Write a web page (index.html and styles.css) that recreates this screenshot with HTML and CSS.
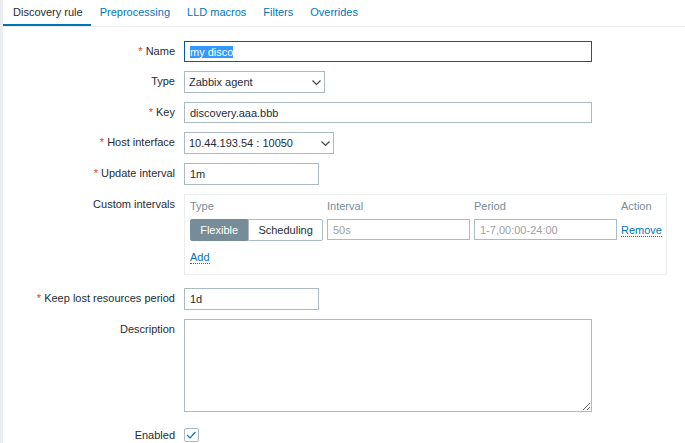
FILE: index.html
```html
<!DOCTYPE html>
<html lang="en">
<head>
  <meta charset="UTF-8">
  <title>Discovery rule</title>
  <link rel="stylesheet" href="styles.css">
</head>
<body>
  <nav class="tabs">
    <a class="tab active" href="#rule">Discovery rule</a>
    <a class="tab" href="#preprocessing">Preprocessing</a>
    <a class="tab" href="#macros">LLD macros</a>
    <a class="tab" href="#filters">Filters</a>
    <a class="tab" href="#overrides">Overrides</a>
  </nav>

  <form class="form">
    <label class="required" for="name">Name</label>
    <input class="text wide" type="text" id="name" value="my disco">

    <label for="type">Type</label>
    <div class="select type-select">
      <select id="type"><option>Zabbix agent</option></select>
      <svg viewBox="0 0 9 6"><path d="M0.5 0.5L4.5 4.5L8.5 0.5"/></svg>
    </div>

    <label class="required" for="key">Key</label>
    <input class="text wide" type="text" id="key" value="discovery.aaa.bbb">

    <label class="required" for="interface">Host interface</label>
    <div class="select interface-select">
      <select id="interface"><option>10.44.193.54 : 10050</option></select>
      <svg viewBox="0 0 9 6"><path d="M0.5 0.5L4.5 4.5L8.5 0.5"/></svg>
    </div>

    <label class="required" for="delay">Update interval</label>
    <input class="text short" type="text" id="delay" value="1m">

    <span class="label" id="intervalsLabel">Custom intervals</span>
    <div class="intervals">
      <table aria-labelledby="intervalsLabel">
        <thead>
          <tr><th>Type</th><th>Interval</th><th>Period</th><th>Action</th></tr>
        </thead>
        <tbody>
          <tr>
            <td>
              <div class="segmented">
                <input type="radio" name="intervalType" id="flexible" checked>
                <label for="flexible">Flexible</label>
                <input type="radio" name="intervalType" id="scheduling">
                <label for="scheduling">Scheduling</label>
              </div>
            </td>
            <td><input class="text" type="text" placeholder="50s" aria-label="Interval"></td>
            <td><input class="text" type="text" placeholder="1-7,00:00-24:00" aria-label="Period"></td>
            <td><button class="link" type="button">Remove</button></td>
          </tr>
        </tbody>
      </table>
      <button class="link" type="button">Add</button>
    </div>

    <label class="required" for="lifetime">Keep lost resources period</label>
    <input class="text short" type="text" id="lifetime" value="1d">

    <label for="description">Description</label>
    <textarea class="wide" id="description"></textarea>

    <label class="enabled" for="enabled">Enabled</label>
    <div class="checkbox enabled">
      <input type="checkbox" id="enabled" checked>
      <svg viewBox="0 0 15 14"><path d="M3 7L6 10L11.5 4"/></svg>
    </div>
  </form>

  <script>
    const nameInput = document.getElementById('name');
    nameInput.focus();
    nameInput.select();
  </script>
</body>
</html>
```
FILE: styles.css
```css
:root {
  --text: #1f2c33;
  --muted: #768d99;
  --border: #acbbc2;
  --line: #ebeef0;
  --accent: #0275b8;
}
* { box-sizing: border-box; margin: 0; padding: 0; }
body {
  min-height: 100vh;
  border-left: 3px solid var(--line);
  background: #fff;
  color: var(--text);
  font: 11px/14px "Liberation Sans", Arial, sans-serif;
}
input, select, textarea, button {
  font: inherit;
  color: inherit;
}
.tabs {
  display: flex;
  height: 27px;
  border-bottom: 1px solid #ebebeb;
}
.tab {
  padding: 5px 8px 5px 9px;
  color: var(--accent);
  text-decoration: none;
}
.tab.active {
  padding-left: 10px;
  border-bottom: 2px solid var(--accent);
  color: var(--text);
}
.form {
  display: grid;
  grid-template-columns: 172px minmax(0, 1fr);
  gap: 9px;
  align-items: start;
  padding: 14px 18px 0 0;
}
.form > label, .label {
  line-height: 20px;
  text-align: right;
}
.required::before {
  content: "* ";
  color: #e33734;
}
.text, select, textarea {
  display: block;
  width: 100%;
  border: 1px solid var(--border);
  border-radius: 0;
  background: #fff;
  outline: none;
}
.text {
  height: 21px;
  padding: 0 5px;
}
.text:focus { border-color: #005e99; }
.text::placeholder { color: #a0a0a0; }
.text::selection { background: #3399ff; color: #fff; }
.wide { max-width: 408px; }
.short {
  max-width: 135px;
  height: 22px;
}
.select { position: relative; }
.type-select { width: 141px; }
.interface-select { width: 150px; }
select {
  height: 22px;
  padding: 0 20px 0 4px;
  appearance: none;
}
.select svg {
  position: absolute;
  top: 9px;
  right: 4px;
  width: 9px;
  height: 6px;
  fill: none;
  stroke: #444;
  stroke-width: 1.2;
  pointer-events: none;
}
.intervals {
  max-width: 483px;
  height: 81px;
  margin-bottom: 4px;
  padding: 5px;
  border: 1px solid var(--line);
}
.intervals table {
  width: 100%;
  table-layout: fixed;
  border-collapse: collapse;
  margin-bottom: 10px;
}
th {
  padding-bottom: 7px;
  color: var(--muted);
  font-weight: normal;
  line-height: 12px;
  text-align: left;
}
th:nth-child(1) { width: 137px; }
th:nth-child(2), th:nth-child(3) { width: 147px; }
td {
  padding-right: 4px;
  vertical-align: top;
}
td:last-child {
  padding: 5px 0 0;
}
.segmented {
  position: relative;
  display: flex;
}
.segmented input {
  position: absolute;
  opacity: 0;
}
.segmented label {
  flex: 1 0 auto;
  height: 22px;
  padding: 0 8px;
  border: 1px solid var(--border);
  border-radius: 0 2px 2px 0;
  line-height: 20px;
  text-align: center;
}
.segmented label:first-of-type {
  border-radius: 2px 0 0 2px;
}
.segmented input:checked + label {
  border-color: var(--muted);
  background: var(--muted);
  color: #fff;
}
.link {
  display: block;
  border: none;
  border-bottom: 1px dotted var(--accent);
  background: none;
  color: var(--accent);
  line-height: 12px;
  cursor: pointer;
}
textarea {
  height: 93px;
  padding: 4px 5px;
  resize: both;
}
.enabled { margin-top: 7px; }
.form > label.enabled { line-height: 14px; }
.checkbox {
  position: relative;
  width: 15px;
  height: 14px;
}
.checkbox input {
  display: block;
  width: 15px;
  height: 14px;
  border: 1px solid var(--border);
  border-radius: 2px;
  appearance: none;
}
.checkbox svg {
  position: absolute;
  inset: 0;
  fill: none;
  stroke: var(--accent);
  stroke-width: 1.2;
  pointer-events: none;
}
.checkbox input:not(:checked) + svg { display: none; }
```
